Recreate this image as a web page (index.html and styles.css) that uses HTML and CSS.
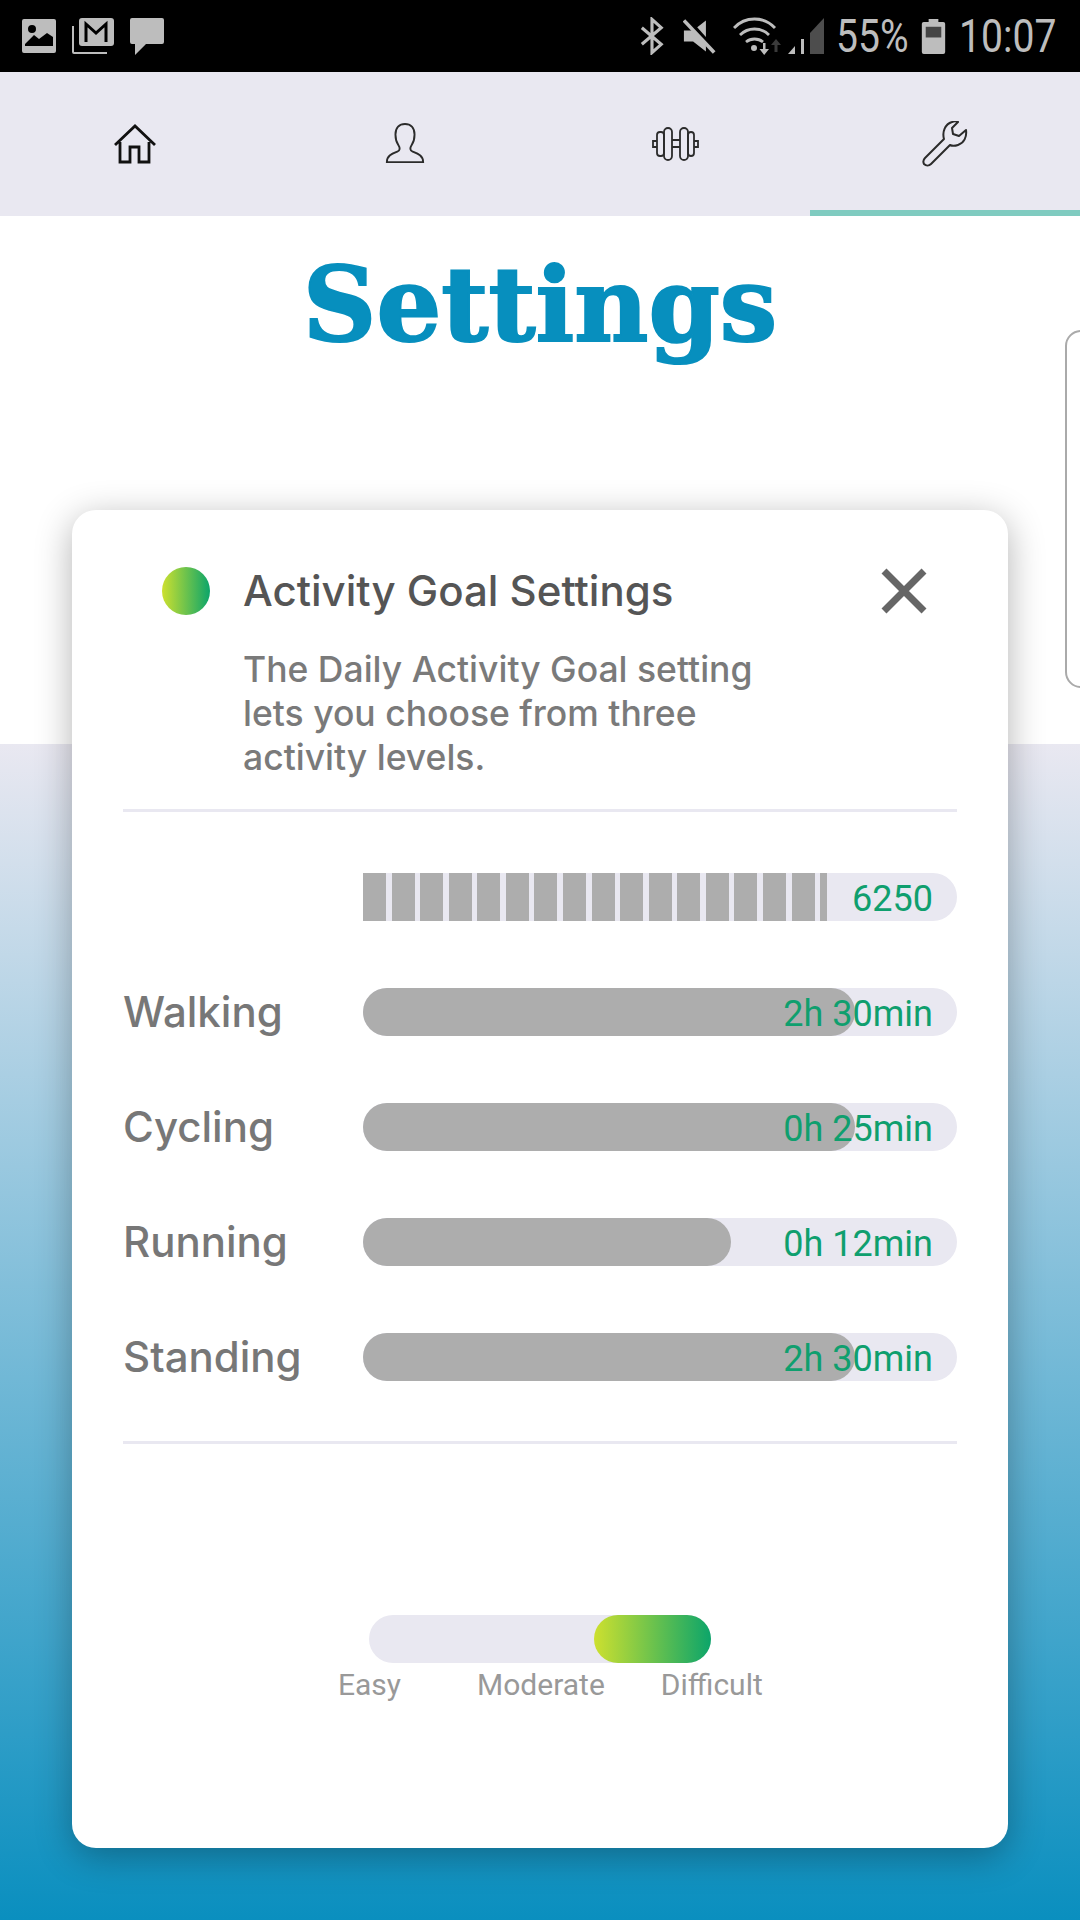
FILE: index.html
```html
<!DOCTYPE html>
<html lang="en">
<head>
  <meta charset="UTF-8" />
  <meta name="viewport" content="width=device-width, initial-scale=1.0" />
  <title>Settings</title>
  <link rel="stylesheet" href="styles.css">
</head>
<body>

  <!-- status bar -->
  <div class="status-bar">
    <div class="status-left">
      <svg width="36" height="34" viewBox="0 0 36 34"><path fill="#bdbdbd" fill-rule="evenodd" d="M3 0h30a2 2 0 0 1 2 2v30a2 2 0 0 1-2 2H3a2 2 0 0 1-2-2V2a2 2 0 0 1 2-2zM11 6a4 4 0 1 0 0 8 4 4 0 0 0 0-8zM4 25v2h28v-9l-6-4-8 6-5-4z"/></svg>
      <svg width="42" height="36" viewBox="0 0 42 36"><path fill="none" stroke="#bdbdbd" stroke-width="2" d="M1 8v26a1 1 0 0 0 1 1h33"/><rect x="7" y="0" width="35" height="28" rx="3" fill="#bdbdbd"/><path fill="none" stroke="#000" stroke-width="3" d="M14 24V6l10 9 10-9v18"/></svg>
      <svg width="36" height="37" viewBox="0 0 36 37"><path fill="#bdbdbd" d="M3 0h30a2 2 0 0 1 2 2v22a2 2 0 0 1-2 2H17L6 37V26H3a2 2 0 0 1-2-2V2a2 2 0 0 1 2-2z"/></svg>
    </div>
    <div class="status-right">
      <svg class="ic-bt" width="24" height="38" viewBox="0 0 26 40"><path fill="none" stroke="#bdbdbd" stroke-width="3.400" d="M2 11l21 18-10 9V2l10 9L2 29"/></svg>
      <svg class="ic-mute" width="33" height="36" viewBox="0 0 36 36"><path fill="#bdbdbd" d="M1 12h10L25 1v34L11 24H1z"/><path stroke="#000" stroke-width="4.500" d="M4 -1l34 38"/><path stroke="#bdbdbd" stroke-width="4" d="M1 1l33 35"/></svg>
      <svg class="ic-wifi" width="48" height="38" viewBox="0 0 48 38"><g fill="none" stroke="#bdbdbd" stroke-width="2.800"><path d="M1 11c11-12 30-12 41 0"/><path d="M7 18c8-8 21-8 29 0"/><path d="M13 25c5-4 12-4 17 0"/></g><circle cx="21" cy="31" r="3" fill="#bdbdbd"/><path fill="#bdbdbd" d="M30 26h2.500v6H36l-4.800 6-4.700-6H30z"/><path fill="#3a3a3a" d="M43 22l5 6h-3.500v7h-3v-7H38z"/></svg>
      <svg class="ic-signal" width="37" height="36" viewBox="0 0 37 36"><path fill="#bdbdbd" d="M1 36l7-8v8zM14 21h3v15h-3z"/><path fill="#4d4d4d" d="M23 15L37 0v36H23z"/></svg>
      <span class="pct">55%</span>
      <svg class="ic-batt" width="25" height="35" viewBox="0 0 24 36"><path fill="#bdbdbd" d="M7 0h10v3h5a2 2 0 0 1 2 2v29a2 2 0 0 1-2 2H2a2 2 0 0 1-2-2V5a2 2 0 0 1 2-2h5z"/><rect x="4" y="8" width="16" height="11" fill="#454545"/></svg>
      <span class="clock">10:07</span>
    </div>
  </div>

  <!-- tabs -->
  <nav class="tabs">
    <div class="tab">
      <svg width="42" height="40" viewBox="0 0 42 40"><path fill="none" stroke="#111" stroke-width="2.800" d="M1 21L21 2l20 19M6 18v20h10V23h9v15h10V18"/></svg>
    </div>
    <div class="tab">
      <svg width="40" height="42" viewBox="0 0 40 44"><path fill="none" stroke="#2b2b2b" stroke-width="2" d="M1 41c0-7 6-9 11-11 3-1 3-4 1-7-2-3-3-6-3-11C10 5 14 1 20 1s10 4 10 11c0 5-1 8-3 11-2 3-2 6 1 7 5 2 11 4 11 11z"/></svg>
    </div>
    <div class="tab">
      <svg width="48" height="34" viewBox="0 0 48 34"><g fill="none" stroke="#2b2b2b" stroke-width="1.800"><rect x="6" y="5" width="7" height="24" rx="3"/><rect x="13" y="1" width="8" height="32" rx="4"/><rect x="29" y="1" width="8" height="32" rx="4"/><rect x="37" y="5" width="6" height="24" rx="3"/><path d="M21 13h8M21 20h8M6 14H2v6h4M43 14h4v6h-4"/></g></svg>
    </div>
    <div class="tab active">
      <svg width="46" height="46" viewBox="0 0 46 46"><path fill="none" stroke="#2b2b2b" stroke-width="2" stroke-linejoin="round" d="M3 37L22 18C20 11 23 3 30 1C32 0 34 0 36 1L30 7L31 13L37 15L44 9C45 16 42 22 36 24C33 25 30 25 28 24L9 43C7 45 4 45 2 43C1 41 1 39 3 37z"/></svg>
    </div>
  </nav>

  <main class="page">
    <h1 class="page-title">Settings</h1>
    <div class="next-card"></div>

    <section class="card">
      <div class="card-head">
        <span class="dot"></span>
        <div class="head-text">
          <h2>Activity Goal Settings</h2>
          <p>The Daily Activity Goal setting lets you choose from three activity levels.</p>
        </div>
        <svg class="close" width="46" height="46" viewBox="0 0 46 46"><path stroke="#666" stroke-width="7" d="M3 3l40 40M43 3L3 43"/></svg>
      </div>

      <div class="rows">
        <div class="row">
          <span class="row-label"></span>
          <div class="bar steps"><div class="fill" style="width: 464px"></div><span class="val">6250</span></div>
        </div>
        <div class="row">
          <span class="row-label">Walking</span>
          <div class="bar"><div class="fill" style="width: 492px"></div><span class="val">2h 30min</span></div>
        </div>
        <div class="row">
          <span class="row-label">Cycling</span>
          <div class="bar"><div class="fill" style="width: 492px"></div><span class="val">0h 25min</span></div>
        </div>
        <div class="row">
          <span class="row-label">Running</span>
          <div class="bar"><div class="fill" style="width: 368px"></div><span class="val">0h 12min</span></div>
        </div>
        <div class="row">
          <span class="row-label">Standing</span>
          <div class="bar"><div class="fill" style="width: 492px"></div><span class="val">2h 30min</span></div>
        </div>
      </div>

      <div class="level">
        <div class="level-track"><div class="level-thumb"></div></div>
        <div class="level-labels">
          <span>Easy</span>
          <span>Moderate</span>
          <span>Difficult</span>
        </div>
      </div>
    </section>
  </main>

</body>
</html>
```

FILE: styles.css
```css
* {
  box-sizing: border-box;
}
html, body {
  margin: 0;
  height: 1920px;
  overflow: hidden;
}
body {
  display: flex;
  flex-direction: column;
  font-family: 'Inter', 'Liberation Sans', sans-serif;
  background: #fff;
}
.status-bar {
  height: 72px;
  background: #000;
  display: flex;
  justify-content: space-between;
  align-items: center;
  padding: 0 25px 0 21px;
}
.status-left, .status-right {
  display: flex;
  align-items: center;
}
.status-left {
  gap: 15px;
}
.status-right {
  color: #bdbdbd;
  font-family: 'Roboto', sans-serif;
  font-size: 46px;
}
.ic-mute {
  margin-left: 19px;
}
.ic-wifi {
  margin-left: 17px;
}
.ic-signal {
  margin-left: 6px;
}
.pct, .clock {
  white-space: nowrap;
  transform: scaleX(0.85);
  transform-origin: left center;
}
.pct {
  width: 73px;
  margin-left: 12px;
}
.ic-batt {
  margin-left: 12px;
}
.clock {
  width: 96px;
  margin-left: 13px;
}
.tabs {
  height: 144px;
  background: #e9e8f1;
  display: grid;
  grid-template-columns: repeat(4, 1fr);
}
.tab {
  display: flex;
  align-items: center;
  justify-content: center;
}
.active {
  padding-top: 6px;
  border-bottom: 6px solid #7fcbc0;
}
.page {
  position: relative;
  flex: 1;
  display: flex;
  flex-direction: column;
  align-items: center;
  background: linear-gradient(#fff 528px, #e9e8f1 528px, #0a8fbf 1704px);
}
.page-title {
  margin: 34px 0 0;
  font-family: 'DejaVu Serif', 'Liberation Serif', serif;
  font-weight: 700;
  font-size: 102px;
  line-height: 110px;
  color: #078fbe;
  -webkit-text-stroke: 2px #078fbe;
}
.next-card {
  position: absolute;
  left: 1065px;
  top: 114px;
  width: 40px;
  height: 358px;
  border: 2px solid #aaa;
  border-radius: 16px;
  background: #fff;
}
.card {
  width: 936px;
  height: 1338px;
  margin-top: 150px;
  padding: 56px 51px 0;
  background: #fff;
  border-radius: 24px;
  box-shadow: 0 8px 36px rgba(0, 0, 0, 0.3);
  display: flex;
  flex-direction: column;
}
.card-head {
  display: flex;
  align-items: flex-start;
  height: 246px;
  border-bottom: 3px solid #e9e8f1;
  padding-left: 39px;
}
.dot {
  width: 48px;
  height: 48px;
  margin-top: 1px;
  border-radius: 50%;
  background: linear-gradient(to right, #cde02f, #0ca56a);
}
.head-text {
  width: 540px;
  margin: 1px 0 0 33px;
}
.head-text h2 {
  margin: 0;
  font-size: 42px;
  font-weight: 500;
  line-height: 48px;
  color: #555;
}
.head-text p {
  margin: 33px 0 0;
  font-size: 35.500px;
  font-weight: 500;
  line-height: 44px;
  color: #7a7a7a;
}
.close {
  margin: 2px 30px 0 auto;
}
.rows {
  display: flex;
  flex-direction: column;
  gap: 67px;
  padding: 61px 0 60px;
  border-bottom: 3px solid #e9e8f1;
}
.row {
  display: flex;
  align-items: center;
  height: 48px;
}
.row-label {
  width: 240px;
  margin-top: -2px;
  font-size: 42px;
  font-weight: 500;
  color: #777;
}
.bar {
  position: relative;
  width: 594px;
  height: 48px;
  display: flex;
  align-items: center;
  justify-content: flex-end;
  padding: 3px 24px 0 0;
  background: #e9e8f1;
  border-radius: 24px;
}
.fill {
  position: absolute;
  left: 0;
  top: 0;
  height: 48px;
  background: #adadad;
  border-radius: 24px;
}
.steps {
  border-radius: 0 24px 24px 0;
}
.steps .fill {
  border-radius: 0;
  background: repeating-linear-gradient(to right, #adadad 0, #adadad 23px, #e9e8f1 23px, #e9e8f1 28.570px);
}
.val {
  position: relative;
  font-family: 'Roboto', sans-serif;
  font-size: 36px;
  color: #0f9f6e;
}
.level {
  margin-top: 171px;
  display: flex;
  flex-direction: column;
  align-items: flex-start;
  padding-left: 246px;
}
.level-track {
  position: relative;
  width: 342px;
  height: 48px;
  background: #e9e8f1;
  border-radius: 24px;
}
.level-thumb {
  position: absolute;
  right: 0;
  top: 0;
  width: 117px;
  height: 48px;
  border-radius: 24px;
  background: linear-gradient(to right, #cde02f, #0ca56a);
}
.level-labels {
  display: flex;
  margin: 4px 0 0 -31px;
  font-family: 'Roboto', sans-serif;
  font-size: 30px;
  color: #999;
}
.level-labels span:nth-child(2) {
  margin-left: 76px;
}
.level-labels span:nth-child(3) {
  margin-left: 56px;
}
```
